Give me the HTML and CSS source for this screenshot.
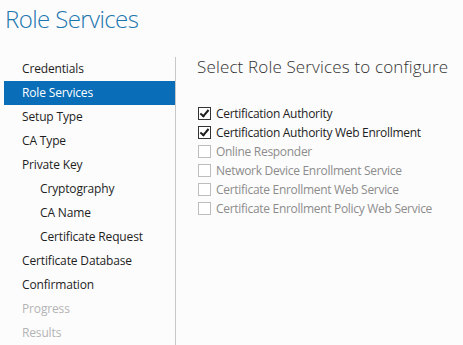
FILE: index.html
```html
<!DOCTYPE html>
<html lang="en">
<head>
    <meta charset="UTF-8">
    <title>Role Services</title>
    <link rel="stylesheet" href="styles.css">
</head>
<body>
    <h1 class="page-title">Role Services</h1>
    <div class="wizard">
        <ul class="steps">
            <li class="step">Credentials</li>
            <li class="step active">Role Services</li>
            <li class="step">Setup Type</li>
            <li class="step">CA Type</li>
            <li class="step">Private Key</li>
            <li class="step sub">Cryptography</li>
            <li class="step sub">CA Name</li>
            <li class="step sub">Certificate Request</li>
            <li class="step">Certificate Database</li>
            <li class="step">Confirmation</li>
            <li class="step disabled">Progress</li>
            <li class="step disabled">Results</li>
        </ul>
        <div class="content">
            <h2 class="content-title">Select Role Services to configure</h2>
            <div class="options">
                <label class="option"><span class="box checked"></span>Certification Authority</label>
                <label class="option"><span class="box checked"></span>Certification Authority Web Enrollment</label>
                <label class="option disabled"><span class="box"></span>Online Responder</label>
                <label class="option disabled"><span class="box"></span>Network Device Enrollment Service</label>
                <label class="option disabled"><span class="box"></span>Certificate Enrollment Web Service</label>
                <label class="option disabled"><span class="box"></span>Certificate Enrollment Policy Web Service</label>
            </div>
        </div>
    </div>
</body>
</html>
```

FILE: styles.css
```css
body {
    margin: 0;
    background: #fcfcfc;
    font-family: "Open Sans", "Noto Sans", sans-serif;
    color: #1e1e1e;
    overflow: hidden;
}

.page-title {
    margin: 0;
    padding: 2px 0 0 5px;
    height: 53px;
    font-size: 24px;
    font-weight: 300;
    color: #1b76ae;
    letter-spacing: -0.6px;
}

.wizard {
    display: flex;
}

.steps {
    list-style: none;
    margin: 2px 0 0 4px;
    padding: 0;
    width: 171px;
    border-right: 1px solid #c8c8c8;
    height: 300px;
}

.step {
    height: 24px;
    line-height: 24px;
    padding-left: 18px;
    font-size: 12px;
    color: #1e1e1e;
    letter-spacing: -0.15px;
}

.step.sub {
    padding-left: 36px;
}

.step.active {
    background: #0a6db8;
    color: #fff;
}

.step.disabled {
    color: #b4b4b4;
}

.content {
    padding-left: 21px;
}

.content-title {
    margin: 0;
    font-size: 17px;
    font-weight: 300;
    color: #333;
    line-height: 24px;
    letter-spacing: 0.15px;
}

.options {
    display: flex;
    flex-direction: column;
    margin-top: 25px;
}

.option {
    display: flex;
    align-items: center;
    height: 19px;
    font-size: 12px;
    letter-spacing: -0.3px;
}

.option.disabled {
    color: #8c8c8c;
}

.box {
    position: relative;
    width: 11px;
    height: 11px;
    border: 1px solid #333;
    margin: 0 5px 0 1px;
    background: #fff;
}

.option.disabled .box {
    border-color: #bdbdbd;
}

.box.checked::after {
    content: "";
    position: absolute;
    left: 3px;
    top: 0px;
    width: 3px;
    height: 7px;
    border: solid #1e1e1e;
    border-width: 0 2px 2px 0;
    transform: rotate(40deg);
}
```
